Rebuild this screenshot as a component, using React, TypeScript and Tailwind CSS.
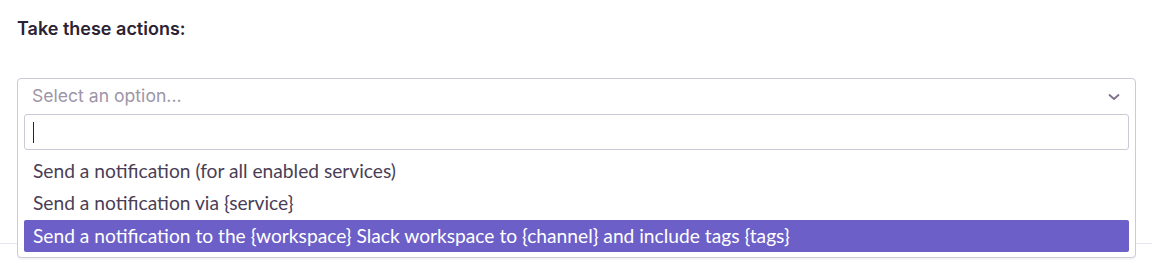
import React from "react";

export default function App() {
  return (
    <div className="relative w-full h-[269px] bg-white overflow-hidden">
      <div className="h-[244px] border-b border-[#e9e5ee] px-[17px] pt-[17px]">
        <div
          className="text-[18px] leading-[24px] font-semibold text-[#2b2233]"
          style={{ fontFamily: "Inter, 'Noto Sans', sans-serif" }}
        >
          Take these actions:
        </div>
      </div>
      <div className="absolute left-[17px] right-[16px] top-[78px] rounded-[4px] border border-[#cfc8d7] bg-white shadow-[0_2px_0_rgba(0,0,0,0.04)] pb-[5px]">
        <div className="flex items-center h-[35px] pl-[14px] pr-[14px]">
          <span
            className="flex-1 text-[17.6px] text-[#9e95a8]"
            style={{ fontFamily: "Inter, 'Noto Sans', sans-serif" }}
          >
            Select an option...
          </span>
          <svg width="14" height="14" viewBox="0 0 14 14" className="text-[#80708f]">
            <path d="M2.5 5 L7 9 L11.5 5" fill="none" stroke="currentColor" strokeWidth="1.8" strokeLinecap="round" strokeLinejoin="round" />
          </svg>
        </div>
        <div className="mx-[6px] h-[36px] rounded-[3px] border border-[#cfc8d7] flex items-center pl-[8px]">
          <div className="w-px h-[21px] bg-[#2b2233]" />
        </div>
        <div
          className="mt-[5px] text-[19.2px] text-[#4a3e56]"
          style={{ fontFamily: "Lato, 'Noto Sans', sans-serif" }}
        >
          <div className="h-[32px] flex items-center px-[15px]">
            Send a notification (for all enabled services)
          </div>
          <div className="h-[33px] flex items-center px-[15px]">
            Send a notification via {"{service}"}
          </div>
          <div className="mx-[6px] h-[32px] flex items-center px-[9px] bg-[#6c5fc7] text-white rounded-[2px]">
            Send a notification to the {"{workspace}"} Slack workspace to {"{channel}"} and include tags {"{tags}"}
          </div>
        </div>
      </div>
    </div>
  );
}
